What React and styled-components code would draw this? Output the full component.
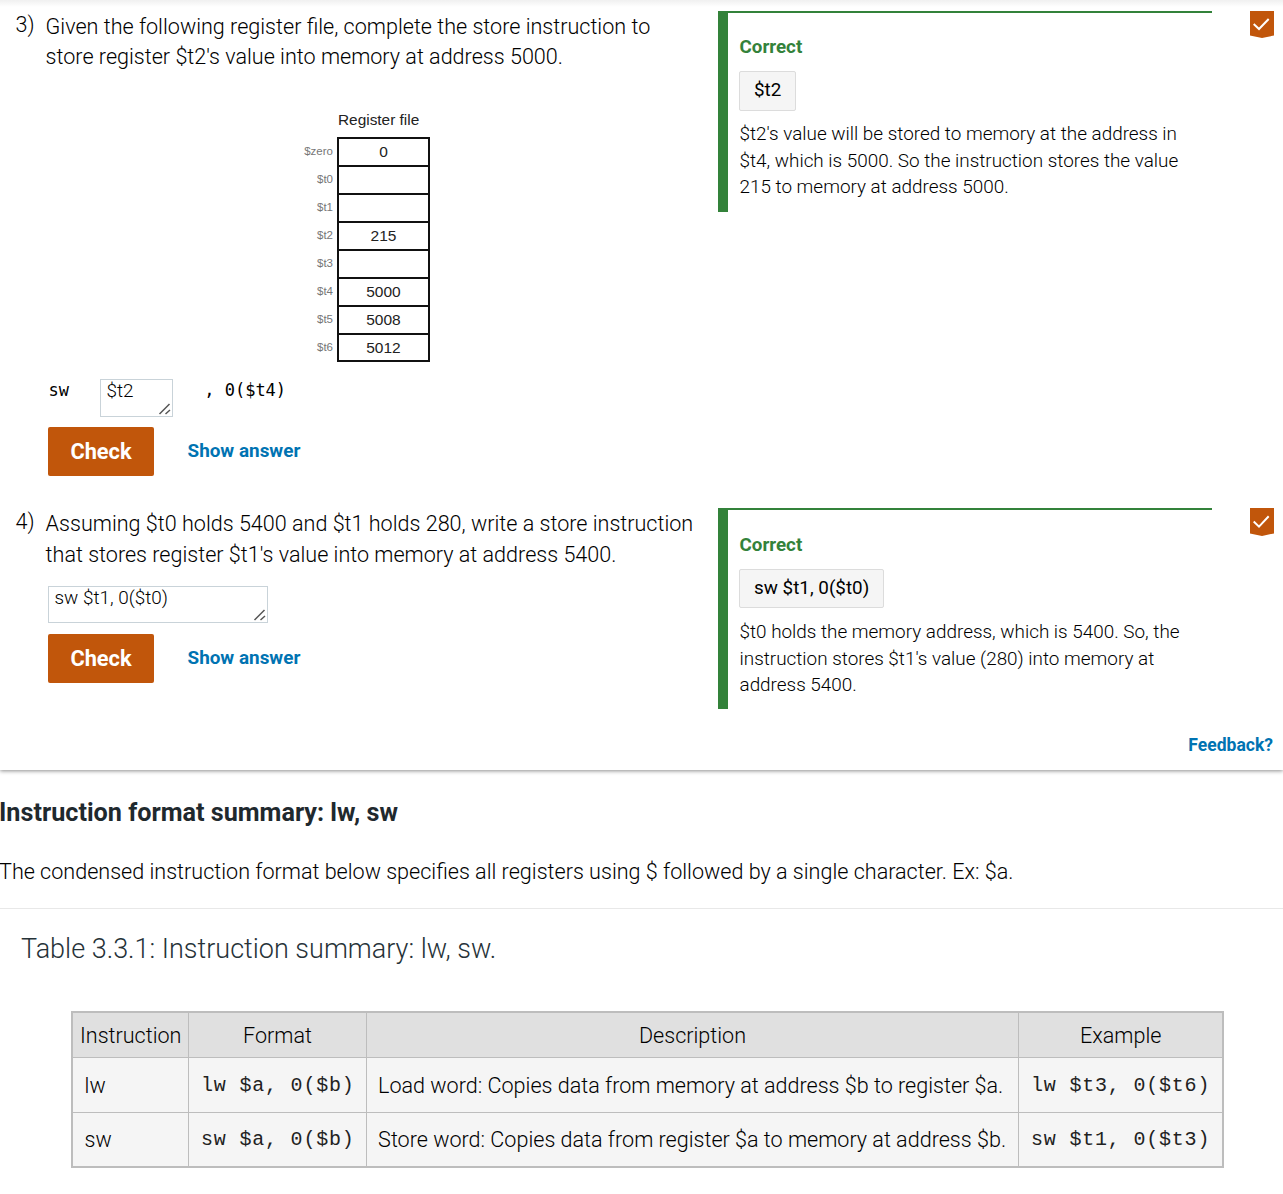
import React from "react";
import styled, { createGlobalStyle } from "styled-components";

const GlobalStyle = createGlobalStyle`
  * { box-sizing: border-box; }
  body {
    margin: 0;
    background: #fff;
    color: #000;
    font-family: Roboto, "Liberation Sans", sans-serif;
    font-weight: 300;
    overflow: hidden;
  }
`;

const Page = styled.main`
  width: 1283px;
  height: 1194px;
  overflow: hidden;
`;

const Activity = styled.section`
  height: 770px;
  padding-top: 11px;
  background: linear-gradient(#f0f0f0, #fff 7px);
  box-shadow: 0 1px 4px rgba(0, 0, 0, 0.45);
`;

const Question = styled.article`
  display: grid;
  grid-template-columns: 46px 672px 494px 1fr;
  align-items: start;
  height: ${(p) => p.$height}px;
`;

const Number = styled.div`
  padding: 1px 0 0 15.5px;
  font-size: 21.6px;
  line-height: 26px;
`;

const Prompt = styled.p`
  margin: 0 0 0 -0.4px;
  padding-top: ${(p) => p.$top}px;
  font-size: 21.57px;
  line-height: ${(p) => p.$leading}px;
  white-space: nowrap;
`;

const Line = styled.span`
  display: block;
  white-space: nowrap;
`;

const Figure = styled.figure`
  display: grid;
  grid-template-columns: 43px 93px;
  column-gap: 4px;
  width: 140px;
  margin: 38px 0 0 244px;
  font-family: "Liberation Sans", Arial, sans-serif;
  font-weight: 400;
`;

const Caption = styled.figcaption`
  grid-column: 2;
  height: 27px;
  padding-left: 1px;
  font-size: 15.4px;
  line-height: 19px;
  white-space: nowrap;
  color: #222;
`;

const Registers = styled.div`
  display: grid;
  grid-auto-rows: 28px;
  justify-items: end;
  align-items: center;
  font-size: 11.5px;
  color: #777;
`;

const Cells = styled.div`
  height: 225px;
  border: 2px solid #111;
  border-bottom-width: 2px;
`;

const Cell = styled.div`
  display: flex;
  justify-content: center;
  align-items: center;
  height: 28px;
  border-bottom: 2px solid #111;
  font-size: 15.5px;
  color: #222;
  &:last-child { border-bottom: 0; height: 26px; }
`;

const AnswerRow = styled.div`
  display: flex;
  align-items: flex-start;
  margin: ${(p) => p.$top}px 0 0 2px;
`;

const Code = styled.code`
  width: ${(p) => p.$width}px;
  padding-left: 0.5px;
  font-family: "DejaVu Sans Mono", monospace;
  font-size: 17px;
  font-weight: 400;
  line-height: 23px;
  white-space: pre;
`;

const Field = styled.div`
  display: flex;
  justify-content: space-between;
  width: ${(p) => p.$width}px;
  height: ${(p) => p.$height}px;
  padding-left: 5.5px;
  border: 1px solid #c9d3d9;
  background: #fff;
  font-size: 18.9px;
  line-height: 22px;
  white-space: nowrap;
`;

const Grip = styled.svg`
  align-self: flex-end;
  width: 14px;
  height: 14px;
  stroke: #555;
  stroke-width: 1.5;
`;

const Actions = styled.div`
  display: flex;
  align-items: center;
  gap: 33.5px;
  margin: ${(p) => p.$top}px 0 0 2px;
`;

const CheckButton = styled.button`
  width: 106px;
  height: 49px;
  padding: 0;
  border: 0;
  border-radius: 2px;
  background: #c1560b;
  color: #fff;
  font: 700 21.8px/49px Roboto, sans-serif;
`;

const LinkButton = styled.button`
  padding: 0 0 2px;
  border: 0;
  background: none;
  color: #0073b2;
  font: 700 18.9px/24px Roboto, sans-serif;
`;

const Explanation = styled.aside`
  height: 201px;
  padding: ${(p) => p.$top}px 0 0 11px;
  border-top: 2px solid #33823a;
  border-left: 10px solid #33823a;
`;

const Verdict = styled.div`
  padding-left: 0.5px;
  color: #33823a;
  font-size: 18.8px;
  font-weight: 700;
  line-height: 22px;
`;

const Chip = styled.div`
  width: fit-content;
  height: ${(p) => p.$height}px;
  margin: 13px 0 ${(p) => p.$gap}px;
  padding: 0 14px;
  border: 1px solid #dcdcdc;
  border-radius: 2px;
  background: #f5f5f5;
  font-size: 18.85px;
  font-weight: 400;
  line-height: 37px;
`;

const Detail = styled.p`
  margin: 0;
  padding-left: 0.5px;
  font-size: 18.9px;
  line-height: 26.6px;
`;

const Badge = styled.svg`
  display: block;
  width: 24px;
  height: ${(p) => p.$height}px;
  margin-left: 38px;
`;

const Feedback = styled.div`
  padding-right: 10px;
  text-align: right;
  color: #0073b2;
  font-size: 17.55px;
  font-weight: 700;
  line-height: 24px;
`;

const Heading = styled.h2`
  margin: 27px 0 0 -1px;
  color: #1f292e;
  font-size: 25.2px;
  font-weight: 700;
  line-height: 32px;
`;

const Intro = styled.p`
  margin: 28px 0 0 -1px;
  font-size: 21.57px;
  line-height: 30px;
`;

const TableSection = styled.section`
  margin-top: 21px;
  border-top: 1px solid #e8e8e8;
  padding: 22px 0 0 71px;
`;

const TableTitle = styled.h3`
  margin: 0 0 44px -50px;
  color: #263238;
  font-size: 27px;
  font-weight: 300;
  line-height: 36px;
`;

const Table = styled.table`
  width: 1152px;
  table-layout: fixed;
  border-collapse: collapse;
  border: 2px solid #bdbdbd;
  background: #f5f5f5;
  font-size: 21.57px;
`;

const Col = styled.col`
  width: ${(p) => p.$width}px;
`;

const Th = styled.th`
  height: 45px;
  padding: 2px 0 0 1px;
  border: 1px solid #bdbdbd;
  background: #e0e0e0;
  font-weight: 300;
`;

const Td = styled.td`
  height: ${(p) => p.$height}px;
  padding: 1px 0 0 11.6px;
  border: 1px solid #bdbdbd;
  white-space: nowrap;
  ${(p) => p.$mono && `
    padding-left: 12.5px;
    color: #222;
    font-family: "Liberation Mono", monospace;
    font-size: 20px;
    letter-spacing: 0.8px;
  `}
`;

const registers = [
  ["$zero", "0"], ["$t0", ""], ["$t1", ""], ["$t2", "215"],
  ["$t3", ""], ["$t4", "5000"], ["$t5", "5008"], ["$t6", "5012"],
];

const rows = [
  ["lw", "lw $a, 0($b)", "Load word: Copies data from memory at address $b to register $a.", "lw $t3, 0($t6)", 55],
  ["sw", "sw $a, 0($b)", "Store word: Copies data from register $a to memory at address $b.", "sw $t1, 0($t3)", 55],
];

const Answer = ({ width, height, children }) => (
  <Field $width={width} $height={height}>
    {children}
    <Grip viewBox="0 0 14 14" fill="none">
      <path d="M1.5 12L11.5 2M7.5 12L12 8" />
    </Grip>
  </Field>
);

const Buttons = ({ top }) => (
  <Actions $top={top}>
    <CheckButton>Check</CheckButton>
    <LinkButton>Show answer</LinkButton>
  </Actions>
);

const Result = ({ answer, lines, top, chipHeight, gap }) => (
  <Explanation $top={top}>
    <Verdict>Correct</Verdict>
    <Chip $height={chipHeight} $gap={gap}>{answer}</Chip>
    <Detail>{lines.map((l) => <Line key={l}>{l}</Line>)}</Detail>
  </Explanation>
);

const Completed = ({ height }) => (
  <Badge $height={height} viewBox="0 0 24 27" preserveAspectRatio="none">
    <path d="M0 0H24V24.5L12 27L0 24.5Z" fill="#c1560b" />
    <path d="M3.7 13L9 18L18.7 8" fill="none" stroke="#fff" strokeWidth="2" />
  </Badge>
);

export default function App() {
  return (
    <Page>
      <GlobalStyle />
      <Activity>
        <Question $height={497}>
          <Number>3)</Number>
          <div>
            <Prompt $leading={30} $top={1}>
              <Line>Given the following register file, complete the store instruction to</Line>
              <Line>store register $t2's value into memory at address 5000.</Line>
            </Prompt>
            <Figure>
              <Caption>Register file</Caption>
              <Registers>{registers.map(([name]) => <span key={name}>{name}</span>)}</Registers>
              <Cells>{registers.map(([name, value]) => <Cell key={name}>{value}</Cell>)}</Cells>
            </Figure>
            <AnswerRow $top={17}>
              <Code $width={52}>sw</Code>
              <Answer width={73} height={38}>$t2</Answer>
              <Code $width={130}>{"   , 0($t4)"}</Code>
            </AnswerRow>
            <Buttons top={10} />
          </div>
          <Result
            answer="$t2"
            top={23}
            chipHeight={40}
            gap={10}
            lines={[
              "$t2's value will be stored to memory at the address in",
              "$t4, which is 5000. So the instruction stores the value",
              "215 to memory at address 5000.",
            ]}
          />
          <Completed height={27} />
        </Question>
        <Question $height={225}>
          <Number>4)</Number>
          <div>
            <Prompt $leading={31} $top={0}>
              <Line>Assuming $t0 holds 5400 and $t1 holds 280, write a store instruction</Line>
              <Line>that stores register $t1's value into memory at address 5400.</Line>
            </Prompt>
            <AnswerRow $top={16}>
              <Answer width={220} height={37}>sw $t1, 0($t0)</Answer>
            </AnswerRow>
            <Buttons top={11} />
          </div>
          <Result
            answer="sw $t1, 0($t0)"
            top={24}
            chipHeight={39}
            gap={11}
            lines={[
              "$t0 holds the memory address, which is 5400. So, the",
              "instruction stores $t1's value (280) into memory at",
              "address 5400.",
            ]}
          />
          <Completed height={28} />
        </Question>
        <Feedback>Feedback?</Feedback>
      </Activity>
      <Heading>Instruction format summary: lw, sw</Heading>
      <Intro>The condensed instruction format below specifies all registers using $ followed by a single character. Ex: $a.</Intro>
      <TableSection>
        <TableTitle>Table 3.3.1: Instruction summary: lw, sw.</TableTitle>
        <Table>
          <colgroup>
            <Col $width={116} /><Col $width={178} /><Col $width={652} /><Col $width={205} />
          </colgroup>
          <thead>
            <tr><Th>Instruction</Th><Th>Format</Th><Th>Description</Th><Th>Example</Th></tr>
          </thead>
          <tbody>
            {rows.map(([name, format, text, example, height]) => (
              <tr key={name}>
                <Td $height={height}>{name}</Td>
                <Td $height={height} $mono>{format}</Td>
                <Td $height={height}>{text}</Td>
                <Td $height={height} $mono>{example}</Td>
              </tr>
            ))}
          </tbody>
        </Table>
      </TableSection>
    </Page>
  );
}
